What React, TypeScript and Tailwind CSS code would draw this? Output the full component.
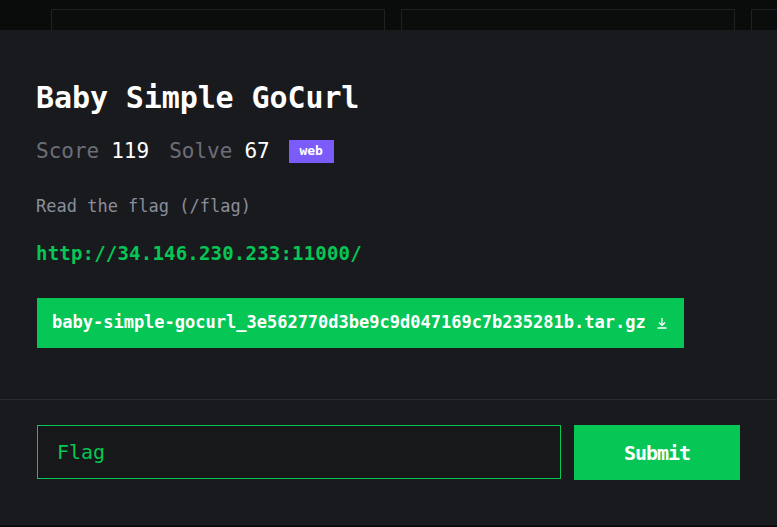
export default function App() {
  const mono = { fontFamily: '"DejaVu Sans Mono", "Liberation Mono", monospace' };

  return (
    <div className="w-[777px] h-[527px] bg-[#0a0b0b] overflow-hidden relative" style={mono}>
      {/* challenge cards behind the modal */}
      <div className="flex gap-[16px] pl-[51px] pt-[9px]">
        <div className="w-[334px] h-[40px] shrink-0 border border-[#1f2122] bg-[#0b0d0d]" />
        <div className="w-[334px] h-[40px] shrink-0 border border-[#1f2122] bg-[#0b0d0d]" />
        <div className="w-[334px] h-[40px] shrink-0 border border-[#1f2122] bg-[#0b0d0d]" />
      </div>

      <div className="absolute left-0 top-[30px] w-[777px] h-[495px] bg-[#191a1d] flex flex-col">
        <div className="px-[36px] pt-[50px] h-[370px] border-b border-[#2a2b2e]">
          <h1 className="text-[30px] leading-[36px] font-bold text-white tracking-[-0.1px]">
            Baby Simple GoCurl
          </h1>

          <div className="mt-[23px] flex items-center text-[21px] leading-[24px]">
            <span className="text-[#6b6e78]">Score</span>
            <span className="ml-[12px] text-white">119</span>
            <span className="ml-[20px] text-[#6b6e78]">Solve</span>
            <span className="ml-[12px] text-white">67</span>
            <span className="ml-[19px] w-[45px] h-[23px] flex items-center justify-center bg-[#7b5cfa] text-white text-[13px] font-bold">
              web
            </span>
          </div>

          <p className="mt-[32px] text-[17px] leading-[22px] text-[#8a8e9b]">Read the flag (/flag)</p>

          <p className="mt-[24px] text-[19px] leading-[24px] text-[#06c655] font-bold tracking-[0.2px]">
            http://34.146.230.233:11000/
          </p>

          <a className="mt-[33px] w-[647px] h-[50px] ml-[1px] flex items-center pl-[15px] bg-[#06c655] text-white text-[17px] font-bold">
            baby-simple-gocurl_3e562770d3be9c9d047169c7b235281b.tar.gz
            <svg className="ml-[10px]" width="12" height="12" viewBox="0 0 12 12" fill="none" stroke="white" strokeWidth="1.3">
              <path d="M6 1v7M3 5.5 6 8.5 9 5.5M1.5 11h9" />
            </svg>
          </a>
        </div>

        <div className="flex gap-[13px] pl-[37px] pr-[37px] pt-[25px]">
          <input
            placeholder="Flag"
            className="w-[524px] h-[54px] border border-[#06c655] bg-[#17181a] px-[19px] text-[20px] text-[#06c655] placeholder:text-[#06c655] outline-none"
            style={mono}
          />
          <button
            className="w-[166px] h-[55px] bg-[#06c655] text-white text-[20px] font-bold tracking-[-1px]"
            style={mono}
          >
            Submit
          </button>
        </div>
      </div>
    </div>
  );
}
